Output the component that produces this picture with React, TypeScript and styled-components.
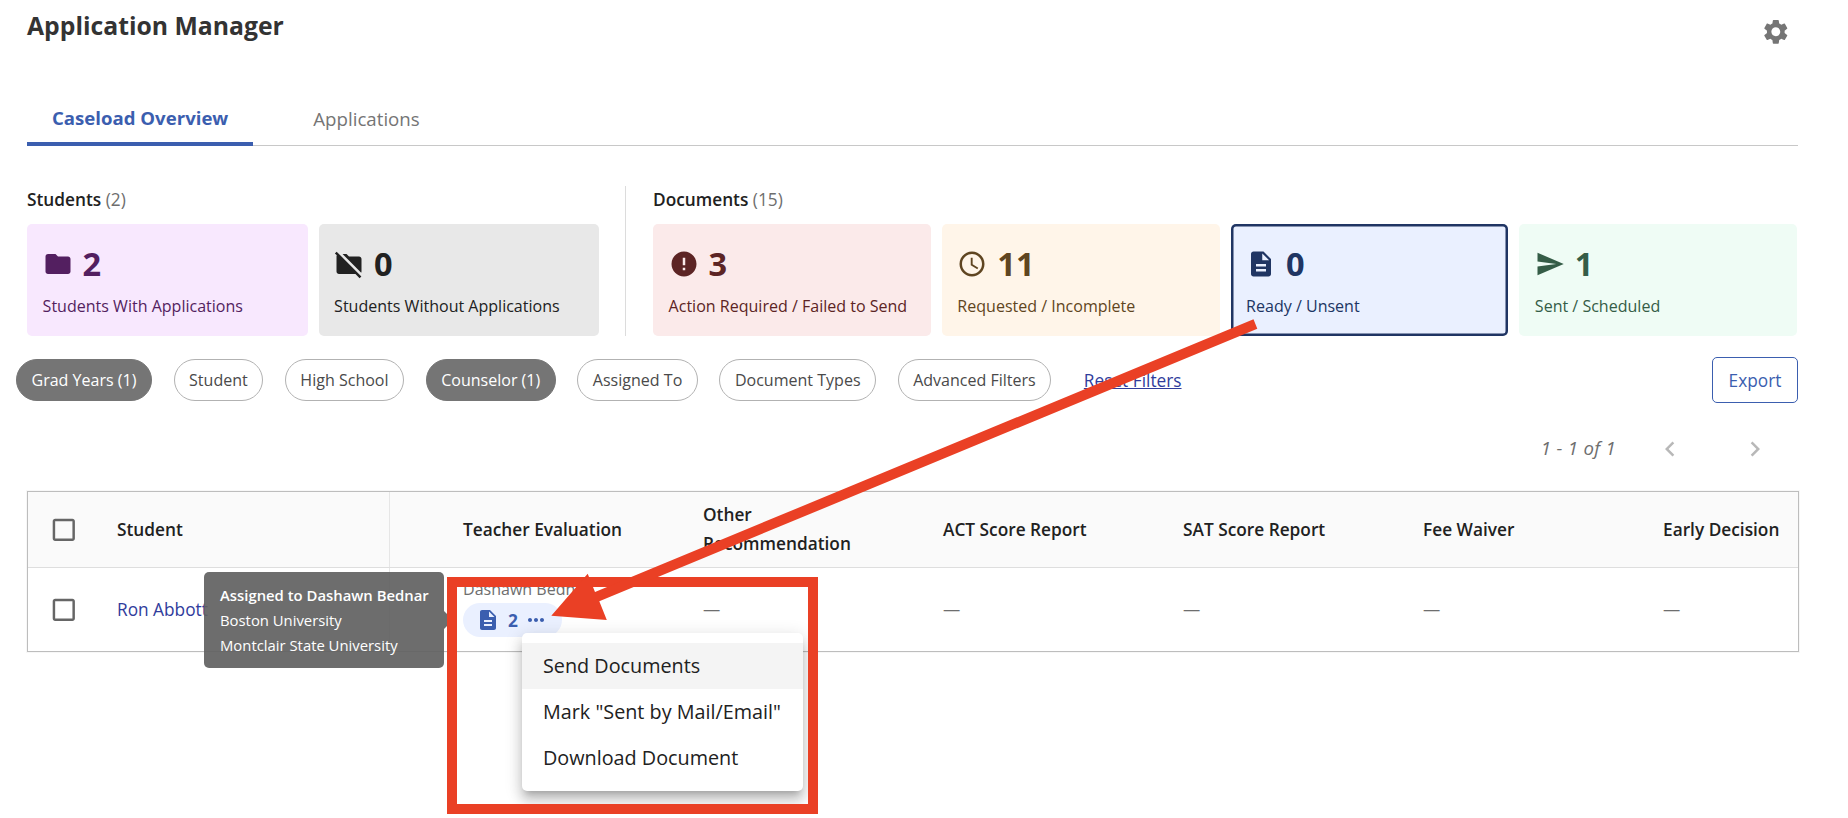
import React from 'react';
import styled, { createGlobalStyle } from 'styled-components';
import {
  MdAccessTime,
  MdCheckBoxOutlineBlank,
  MdChevronLeft,
  MdChevronRight,
  MdDescription,
  MdError,
  MdFolder,
  MdFolderOff,
  MdMoreHoriz,
  MdSend,
  MdSettings,
} from 'react-icons/md';
import type { IconType } from 'react-icons';

const GlobalStyle = createGlobalStyle`
  * { box-sizing: border-box; }
  body {
    margin: 0;
    background: #fff;
    color: #212121;
    font-family: 'Open Sans', 'Noto Sans', sans-serif;
    font-size: 17.27px;
  }
  svg { display: block; flex: none; }
  button { font: inherit; cursor: pointer; }
`;

const Page = styled.main`
  position: relative;
  width: 1848px;
  height: 818px;
  padding: 0 49px 0 27px;
  overflow: hidden;
`;

const Header = styled.header`
  display: flex;
  justify-content: space-between;
  height: 85px;
  padding: 10px 8px 0 0;
`;

const Title = styled.h1`
  margin: 0;
  font-size: 24.75px;
  line-height: 31px;
  font-weight: 700;
  color: #333;
`;

const SettingsButton = styled.button`
  height: 30px;
  margin-top: 7px;
  padding: 0;
  border: 0;
  background: none;
  color: #757575;
`;

const Tabs = styled.nav`
  display: flex;
  gap: 35px;
  height: 61px;
  margin-right: 1px;
  box-shadow: inset 0 -1px #c8c8c8;
`;

const Tab = styled.a<{ $active?: boolean }>`
  height: 61px;
  padding: ${(p) => (p.$active ? '18px 25px 0' : '19px 25px 0')};
  border-bottom: 4px solid ${(p) => (p.$active ? '#3b5eaf' : 'transparent')};
  font-size: ${(p) => (p.$active ? 18.6 : 18.7)}px;
  line-height: 30px;
  font-weight: ${(p) => (p.$active ? 700 : 400)};
  color: ${(p) => (p.$active ? '#3b5eaf' : '#757575')};
`;

const Overview = styled.section`
  display: flex;
  height: 150px;
  margin: 40px 2px 0 0;
`;

const StatGroup = styled.div<{ $width: number }>`
  width: ${(p) => p.$width}px;
`;

const GroupDivider = styled.div`
  width: 1px;
  margin: 0 27px 0 26px;
  background: #dcdcdc;
`;

const GroupTitle = styled.h2`
  margin: 0 0 11px;
  font-size: 17.27px;
  line-height: 27px;
  font-weight: 600;
`;

const GroupCount = styled.span`
  font-weight: 400;
  color: #6e6e6e;
`;

const Cards = styled.div`
  display: flex;
  gap: 11px;
`;

const Card = styled.div<{ $bg: string; $ink: string; $selected?: boolean }>`
  flex: 1 1 0;
  height: 112px;
  padding: 25px 14px 0 15.6px;
  border-radius: 5px;
  background: ${(p) => p.$bg};
  color: ${(p) => p.$ink};
  box-shadow: ${(p) => (p.$selected ? `inset 0 0 0 2.5px ${p.$ink}` : 'none')};
`;

const CardTop = styled.div`
  display: flex;
  gap: 10px;
  height: 30px;
`;

const CardNumber = styled.strong`
  font-size: 32.5px;
  line-height: 29px;
  font-weight: 700;
`;

const CardLabel = styled.div`
  margin-top: 15px;
  font-size: 16.05px;
  line-height: 24px;
  white-space: nowrap;
`;

const FilterBar = styled.div`
  display: flex;
  align-items: center;
  gap: 21.6px;
  height: 46px;
  margin: 21px 1px 0 -11px;
`;

const FilterChip = styled.button<{ $active?: boolean }>`
  height: 42px;
  padding: 0 14.5px;
  border: 1px solid ${(p) => (p.$active ? '#757575' : '#b2b2b2')};
  border-radius: 21px;
  background: ${(p) => (p.$active ? '#757575' : '#fff')};
  color: ${(p) => (p.$active ? '#fff' : '#4a4a4a')};
  font-size: 16.05px;
  line-height: 24px;
  white-space: nowrap;
`;

const ResetLink = styled.a`
  margin-left: 11px;
  color: #303c9c;
  text-decoration: underline;
`;

const ExportButton = styled.button`
  width: 86px;
  height: 46px;
  margin-left: auto;
  padding: 0;
  border: 1.2px solid #3b5eaf;
  border-radius: 5px;
  background: #fff;
  color: #3b5eaf;
`;

const Pagination = styled.div`
  display: flex;
  justify-content: flex-end;
  height: 88px;
  padding: 31px 29px 0 0;
  gap: 55px;
  color: #b8b8b8;
`;

const PageRange = styled.span`
  margin: -1px -16px 0 0;
  font-size: 18.6px;
  line-height: 30px;
  letter-spacing: 0.3px;
  font-style: italic;
  color: #6e6e6e;
`;

const Table = styled.div`
  border: 1px solid #bdbdbd;
  box-shadow: 0 0 0 1px rgba(0, 0, 0, 0.03);
`;

const Row = styled.div<{ $head?: boolean }>`
  display: grid;
  grid-template-columns: 89px 273px 313px repeat(4, 240px) 1fr;
  height: ${(p) => (p.$head ? 76 : 83)}px;
  border-bottom: ${(p) => (p.$head ? '1px solid #dedede' : '0')};
  background: ${(p) => (p.$head ? '#fafafa' : '#fff')};
  font-weight: ${(p) => (p.$head ? 600 : 400)};
  line-height: 29px;
`;

const Cell = styled.div<{ $kind?: 'check' | 'student' | 'first' }>`
  display: flex;
  flex-direction: column;
  justify-content: center;
  white-space: nowrap;
  padding-left: ${(p) => (p.$kind === 'check' ? 21 : p.$kind === 'first' ? 73 : 0)}px;
  border-right: ${(p) => (p.$kind === 'student' ? '1px solid #e6e6e6' : '0')};
`;

const TwoLineHeading = styled.div`
  margin-bottom: 2px;
  white-space: pre-line;
`;

const Checkbox = styled(MdCheckBoxOutlineBlank)`
  color: #666;
`;

const StudentLink = styled.a`
  color: #303c9c;
`;

const Dash = styled.span`
  color: #6e6e6e;
`;

const Teacher = styled.div`
  height: 24px;
  margin-bottom: 2px;
  font-size: 16.05px;
  line-height: 24px;
  color: #6e6e6e;
`;

const DocPill = styled.div`
  display: flex;
  align-items: center;
  width: 99px;
  height: 34px;
  margin-bottom: 5px;
  padding-left: 13px;
  border-radius: 17px;
  background: #eaf0ff;
  color: #3b5eaf;
`;

const DocCount = styled.strong`
  width: 16px;
  margin: 0 0 0 8px;
  font-weight: 700;
`;

const Tooltip = styled.div`
  position: absolute;
  left: 204px;
  top: 572px;
  width: 240px;
  height: 96px;
  padding: 11px 16px;
  border-radius: 5px;
  background: rgba(97, 97, 97, 0.92);
  color: #fff;
  font-size: 14.85px;
  line-height: 24.5px;
  white-space: nowrap;

  &::after {
    content: '';
    position: absolute;
    left: 100%;
    top: 39px;
    border: 9px solid transparent;
    border-left: 9px solid rgba(97, 97, 97, 0.92);
    border-right: 0;
  }
`;

const TooltipTitle = styled.div`
  line-height: 24px;
  margin-bottom: 1px;
  font-weight: 600;
`;

const Highlight = styled.div`
  position: absolute;
  left: 447px;
  top: 577px;
  width: 371px;
  height: 237px;
  border: 10px solid #ea4025;
`;

const Menu = styled.div`
  position: absolute;
  left: 522px;
  top: 633px;
  width: 281px;
  height: 158px;
  padding: 10px 0;
  border-radius: 5px;
  background: #fff;
  box-shadow:
    0 6px 6px -4px rgba(0, 0, 0, 0.2),
    0 10px 12px 1px rgba(0, 0, 0, 0.14),
    0 4px 17px 2px rgba(0, 0, 0, 0.12);
`;

const MenuItem = styled.div<{ $hover?: boolean }>`
  height: 46px;
  padding-left: 21px;
  background: ${(p) => (p.$hover ? '#f4f4f4' : 'transparent')};
  font-size: 19.8px;
  line-height: 46px;
  white-space: nowrap;
`;

const ArrowLayer = styled.svg`
  position: absolute;
  inset: 0;
  pointer-events: none;
`;

interface Stat {
  icon: IconType;
  value: number;
  label: string;
  bg: string;
  ink: string;
  selected?: boolean;
}

const studentStats: Stat[] = [
  { icon: MdFolder, value: 2, label: 'Students With Applications', bg: '#f8e8fe', ink: '#531f60' },
  { icon: MdFolderOff, value: 0, label: 'Students Without Applications', bg: '#e8e8e8', ink: '#212121' },
];

const documentStats: Stat[] = [
  { icon: MdError, value: 3, label: 'Action Required / Failed to Send', bg: '#fbeaea', ink: '#5c2424' },
  { icon: MdAccessTime, value: 11, label: 'Requested / Incomplete', bg: '#fff5e9', ink: '#5f4521' },
  { icon: MdDescription, value: 0, label: 'Ready / Unsent', bg: '#eaf0ff', ink: '#203563', selected: true },
  { icon: MdSend, value: 1, label: 'Sent / Scheduled', bg: '#effcf5', ink: '#355d47' },
];

const filters = [
  { label: 'Grad Years (1)', active: true },
  { label: 'Student' },
  { label: 'High School' },
  { label: 'Counselor (1)', active: true },
  { label: 'Assigned To' },
  { label: 'Document Types' },
  { label: 'Advanced Filters' },
];

const otherColumns = ['ACT Score Report', 'SAT Score Report', 'Fee Waiver', 'Early Decision'];

function StatCard({ icon: Icon, value, label, bg, ink, selected }: Stat) {
  return (
    <Card $bg={bg} $ink={ink} $selected={selected}>
      <CardTop>
        <Icon size={30} />
        <CardNumber>{value}</CardNumber>
      </CardTop>
      <CardLabel>{label}</CardLabel>
    </Card>
  );
}

export default function App() {
  return (
    <>
      <GlobalStyle />
      <Page>
        <Header>
          <Title>Application Manager</Title>
          <SettingsButton aria-label="Settings">
            <MdSettings size={29.6} />
          </SettingsButton>
        </Header>

        <Tabs>
          <Tab $active>Caseload Overview</Tab>
          <Tab>Applications</Tab>
        </Tabs>

        <Overview>
          <StatGroup $width={572}>
            <GroupTitle>
              Students <GroupCount>(2)</GroupCount>
            </GroupTitle>
            <Cards>
              {studentStats.map((s) => (
                <StatCard key={s.label} {...s} />
              ))}
            </Cards>
          </StatGroup>
          <GroupDivider />
          <StatGroup $width={1144}>
            <GroupTitle>
              Documents <GroupCount>(15)</GroupCount>
            </GroupTitle>
            <Cards>
              {documentStats.map((s) => (
                <StatCard key={s.label} {...s} />
              ))}
            </Cards>
          </StatGroup>
        </Overview>

        <FilterBar>
          {filters.map((f) => (
            <FilterChip key={f.label} $active={f.active}>
              {f.label}
            </FilterChip>
          ))}
          <ResetLink>Reset Filters</ResetLink>
          <ExportButton>Export</ExportButton>
        </FilterBar>

        <Pagination>
          <PageRange>1 - 1 of 1</PageRange>
          <MdChevronLeft size={30} />
          <MdChevronRight size={30} />
        </Pagination>

        <Table>
          <Row $head>
            <Cell $kind="check">
              <Checkbox size={29.6} />
            </Cell>
            <Cell $kind="student">Student</Cell>
            <Cell $kind="first">Teacher Evaluation</Cell>
            <Cell>
              <TwoLineHeading>{'Other\nRecommendation'}</TwoLineHeading>
            </Cell>
            {otherColumns.map((c) => (
              <Cell key={c}>{c}</Cell>
            ))}
          </Row>
          <Row>
            <Cell $kind="check">
              <Checkbox size={29.6} />
            </Cell>
            <Cell $kind="student">
              <StudentLink>Ron Abbott</StudentLink>
            </Cell>
            <Cell $kind="first">
              <Teacher>Dashawn Bednar</Teacher>
              <DocPill>
                <MdDescription size={24} />
                <DocCount>2</DocCount>
                <MdMoreHoriz size={24} />
              </DocPill>
            </Cell>
            <Cell>
              <Dash>—</Dash>
            </Cell>
            {otherColumns.map((c) => (
              <Cell key={c}>
                <Dash>—</Dash>
              </Cell>
            ))}
          </Row>
        </Table>

        <Tooltip role="tooltip">
          <TooltipTitle>Assigned to Dashawn Bednar</TooltipTitle>
          <div>Boston University</div>
          <div>Montclair State University</div>
        </Tooltip>

        <Menu>
          <MenuItem $hover>Send Documents</MenuItem>
          <MenuItem>Mark "Sent by Mail/Email"</MenuItem>
          <MenuItem>Download Document</MenuItem>
        </Menu>

        <Highlight />
        <ArrowLayer width="1848" height="818" viewBox="0 0 1848 818">
          <path
            fill="#ea4025"
            d="M1253.5 319.3 L1257.3 328.8 L599.3 601.2 L606.8 620 L551.3 615.7 L587.7 573.7 L595 592 Z"
          />
        </ArrowLayer>
      </Page>
    </>
  );
}
